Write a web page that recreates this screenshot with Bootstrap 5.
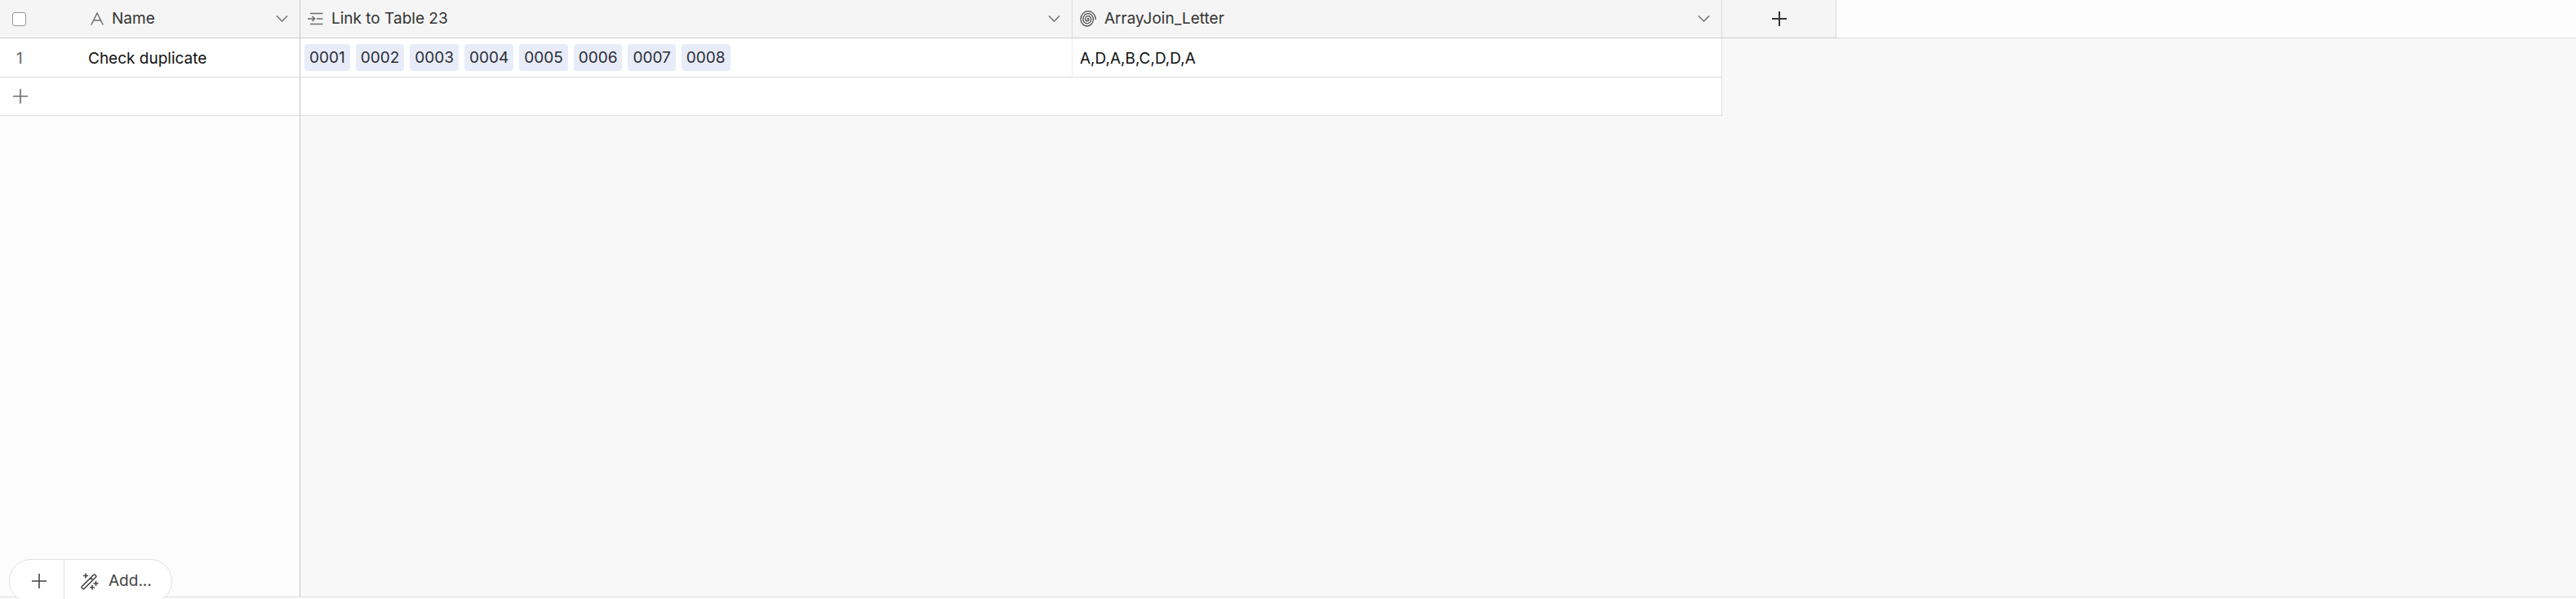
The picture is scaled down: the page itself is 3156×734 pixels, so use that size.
<!DOCTYPE html>
<html lang="en">
<head>
<meta charset="utf-8">
<meta name="viewport" content="width=device-width, initial-scale=1">
<title>Grid view</title>
<link href="https://cdn.jsdelivr.net/npm/bootstrap@5.3.0/dist/css/bootstrap.min.css" rel="stylesheet">
<style>
body { font-family: Inter, "Liberation Sans", sans-serif; font-size: 19px; line-height: 24px; color: #111; background: #fcfcfc; }
svg { display: block; flex: none; fill: none; stroke: currentColor; }
.pane-left { width: 368px; background: #fcfcfc; border-right: 1px solid #c6c6c6; }
.pane-right { background: #f8f8f8; min-width: 0; }
.sheet { table-layout: fixed; width: 100%; border-collapse: separate; border-spacing: 0; }
.sheet th, .sheet td { padding: 0; vertical-align: middle; }
.sheet th { height: 47px; font-weight: 400; color: #333; background: #f5f5f5; border-bottom: 1px solid #cecece; }
.sheet td { height: 48px; background: #fff; border-bottom: 1px solid #dedede; }
.sheet .new-row td { height: 47px; }
.col-num { width: 72px; }
.col-link { width: 946px; }
.col-join { width: 796px; }
.col-plus { width: 140px; }
.sheet th.edge { border-right: 1px solid #dadada; }
.sheet td.edge { border-right: 1px solid #ececec; }
.sheet td.edge-end { border-right: 1px solid #dedede; }
.sheet th.rest { background: #fdfdfd; border-bottom-color: #dedede; }
.sheet td.void { background: transparent; border: 0; }
.field { gap: 10px; padding: 0 14px 0 9px; }
.name-field { padding-left: 39px; }
.cell-text { padding: 2px 9px 0; }
.name-text { padding-left: 36px; }
.plain { border: 0; background: none; padding: 0; color: inherit; }
.ico, .plain.ico { color: #6e6e6e; }
.ico-dark { color: #4c4c4c; }
.num { color: #666; padding: 2px 0 0 20px; }
.form-check-input.pick { width: 17px; height: 17px; margin: 0 0 0 15px; border: 1px solid #8f969c; border-radius: 3px; display: block; }
.chip { background: #e8ecf9; color: #2a2d36; border-radius: 4px; padding: 5px 6px 4px; }
.chips { gap: 7px; padding-left: 5px; }
.strip { height: 3px; border-top: 1px solid #dedede; background: #fcfcfc; }
.adder { left: 11px; bottom: -5px; height: 54px; border: 1px solid #e0e0e0; border-radius: 27px; background: #fff; color: #444; }
.adder button + button { border-left: 1px solid #e0e0e0; }
.adder-plus { width: 66px; padding-left: 27px; }
.shell { height: 100vh; }
</style>
</head>
<body>
<div class="shell d-flex flex-column overflow-hidden position-relative">
  <main class="d-flex flex-grow-1">
    <section class="pane-left flex-shrink-0">
      <table class="sheet">
        <colgroup><col class="col-num"><col></colgroup>
        <thead><tr>
          <th scope="col"><input type="checkbox" class="pick form-check-input" aria-label="Select all rows"></th>
          <th scope="col"><div class="field name-field d-flex align-items-center">
            <svg class="ico" width="16" height="16" viewBox="0 0 16 16" stroke-width="1.5" stroke-linecap="round" stroke-linejoin="round"><path d="M1 15 8 1l7 14M3.500 10h9"/></svg>
            <span class="flex-grow-1">Name</span>
            <button class="plain ico" aria-label="Name menu"><svg width="15" height="10" viewBox="0 0 15 10" stroke-width="1.500"><path d="M1 1.500 7.500 8 14 1.500"/></svg></button>
          </div></th>
        </tr></thead>
        <tbody>
          <tr><td><div class="num">1</div></td><td><div class="cell-text name-text">Check duplicate</div></td></tr>
          <tr class="new-row"><td colspan="2"><button class="plain ico d-block ms-3" aria-label="Add row"><svg width="18" height="18" viewBox="0 0 18 18" stroke-width="1.600"><path d="M9 0v18M0 9h18"/></svg></button></td></tr>
        </tbody>
      </table>
    </section>
    <section class="pane-right flex-grow-1">
      <table class="sheet">
        <colgroup><col class="col-link"><col class="col-join"><col class="col-plus"><col></colgroup>
        <thead><tr>
          <th scope="col" class="edge"><div class="field d-flex align-items-center">
            <svg class="ico" width="19" height="16" viewBox="0 0 19 16" stroke-width="1.700"><path d="M3 1.500h15.500M11 8h7.500M3 14.500h15.500M0 8h8M5.500 5 8.500 8l-3 3"/></svg>
            <span class="flex-grow-1">Link to Table 23</span>
            <button class="plain ico" aria-label="Link to Table 23 menu"><svg width="15" height="10" viewBox="0 0 15 10" stroke-width="1.500"><path d="M1 1.500 7.500 8 14 1.500"/></svg></button>
          </div></th>
          <th scope="col" class="edge"><div class="field d-flex align-items-center">
            <svg class="ico-dark" width="20" height="20" viewBox="0.500 0 20 20" stroke-width="1.300" stroke-linecap="round"><path d="M10 10.500A0.700 0.800 0 0 1 11.400 10.500A2.100 2.300 0 0 1 7.200 10.500A3.500 3.900 0 0 1 14.200 10.500A4.900 5.400 0 0 1 4.400 10.500A6.300 6.900 0 0 1 17 10.500A7.700 8.500 0 0 1 1.600 10.500A9.100 9.800 0 0 1 19.800 10.500"/></svg>
            <span class="flex-grow-1">ArrayJoin_Letter</span>
            <button class="plain ico" aria-label="ArrayJoin_Letter menu"><svg width="15" height="10" viewBox="0 0 15 10" stroke-width="1.500"><path d="M1 1.500 7.500 8 14 1.500"/></svg></button>
          </div></th>
          <th scope="col" class="edge"><button class="plain d-block mx-auto" aria-label="Add field"><svg width="18" height="18" viewBox="0 0 18 18" stroke-width="2"><path d="M9 0v18M0 9h18"/></svg></button></th>
          <th class="rest"></th>
        </tr></thead>
        <tbody>
          <tr>
            <td class="edge"><div class="chips d-flex">
              <span class="chip">0001</span><span class="chip">0002</span><span class="chip">0003</span><span class="chip">0004</span><span class="chip">0005</span><span class="chip">0006</span><span class="chip">0007</span><span class="chip">0008</span>
            </div></td>
            <td class="edge-end"><div class="cell-text">A,D,A,B,C,D,D,A</div></td>
            <td class="void" colspan="2"></td>
          </tr>
          <tr class="new-row"><td colspan="2" class="edge-end"></td><td class="void" colspan="2"></td></tr>
        </tbody>
      </table>
    </section>
  </main>
  <div class="strip"></div>
  <div class="adder position-absolute d-flex overflow-hidden">
    <button class="plain adder-plus" aria-label="Add record"><svg width="18" height="18" viewBox="0 0 18 18" stroke-width="1.600"><path d="M9 0v18M0 9h18"/></svg></button>
    <button class="plain d-flex align-items-center ps-3 pe-4"><svg class="ms-1 me-2" width="22" height="21" viewBox="0 0 22 21" stroke-width="1.600" stroke-linejoin="round" stroke-linecap="round"><path d="M1.500 16.500 15.500 2.500q1-1 2 0l.8.800q1 1 0 2L4.300 19.300q-1 1-2 0l-.8-.800q-1-1 0-2zM12 6l2.800 2.800M6 1v5M3.500 3.500h5M18.500 10.500v5M16 13h5M14 15.500v4.500M11.700 17.800h4.600"/></svg><span class="ps-1">Add...</span></button>
  </div>
</div>
<script src="https://cdn.jsdelivr.net/npm/bootstrap@5.3.0/dist/js/bootstrap.bundle.min.js"></script>
</body>
</html>
